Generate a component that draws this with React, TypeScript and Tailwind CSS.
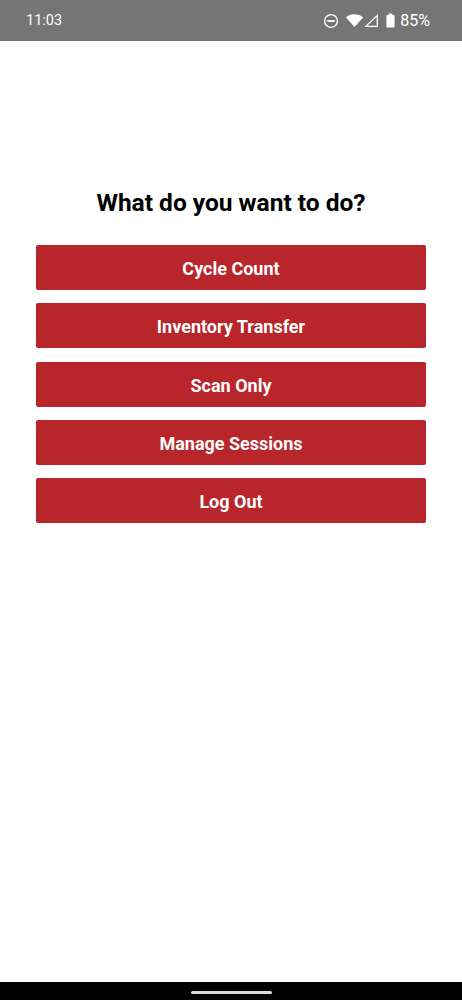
const actions = ['Cycle Count', 'Inventory Transfer', 'Scan Only', 'Manage Sessions', 'Log Out'];

function StatusIcons() {
  return (
    <svg width="72" height="18" viewBox="0 0 72 18" fill="none">
      {/* do not disturb */}
      <circle cx="8" cy="9" r="6.4" stroke="#fff" strokeWidth="1.4" />
      <rect x="4.200" y="8.100" width="7.600" height="1.800" fill="#fff" />
      {/* wifi */}
      <path d="M23 5.400C25.200 3.300 28 2.200 31.500 2.200s6.300 1.100 8.500 3.200L31.500 15z" fill="#fff" />
      {/* signal */}
      <path d="M54.300 3.400v11h-11.500z" stroke="#fff" strokeWidth="1.300" strokeLinejoin="miter" />
      {/* battery */}
      <path d="M65.700 1.500h3.600v1.500h1.300c.6 0 1 .4 1 1v10.500c0 .6-.4 1-1 1h-6.200c-.6 0-1-.4-1-1V4c0-.6.4-1 1-1h1.300z" fill="#fff" />
    </svg>
  );
}

export default function App() {
  return (
    <div className="flex h-[1000px] w-full flex-col bg-white font-['Roboto',sans-serif]">
      <div className="flex h-[41px] items-center justify-between bg-[#767575] pl-[26px] pr-[32px] text-white">
        <span className="text-[14.5px]">11:03</span>
        <div className="flex items-center gap-[5px]">
          <StatusIcons />
          <span className="text-[16px]">85%</span>
        </div>
      </div>

      <div className="flex flex-1 flex-col px-[36px] pt-[147px]">
        <h1 className="text-center text-[24.5px] leading-[30px] font-bold text-black">What do you want to do?</h1>
        <div className="mt-[27px] flex flex-col gap-[13.25px]">
          {actions.map((label) => (
            <button
              key={label}
              className="h-[45px] rounded-[2px] bg-[#b8252a] pt-[2px] text-center text-[18px] font-bold text-white"
            >
              {label}
            </button>
          ))}
        </div>
      </div>

      <div className="flex h-[18px] items-center justify-center bg-black">
        <div className="mt-[3px] h-[3px] w-[81px] rounded-full bg-[#d8d8d8]" />
      </div>
    </div>
  );
}
